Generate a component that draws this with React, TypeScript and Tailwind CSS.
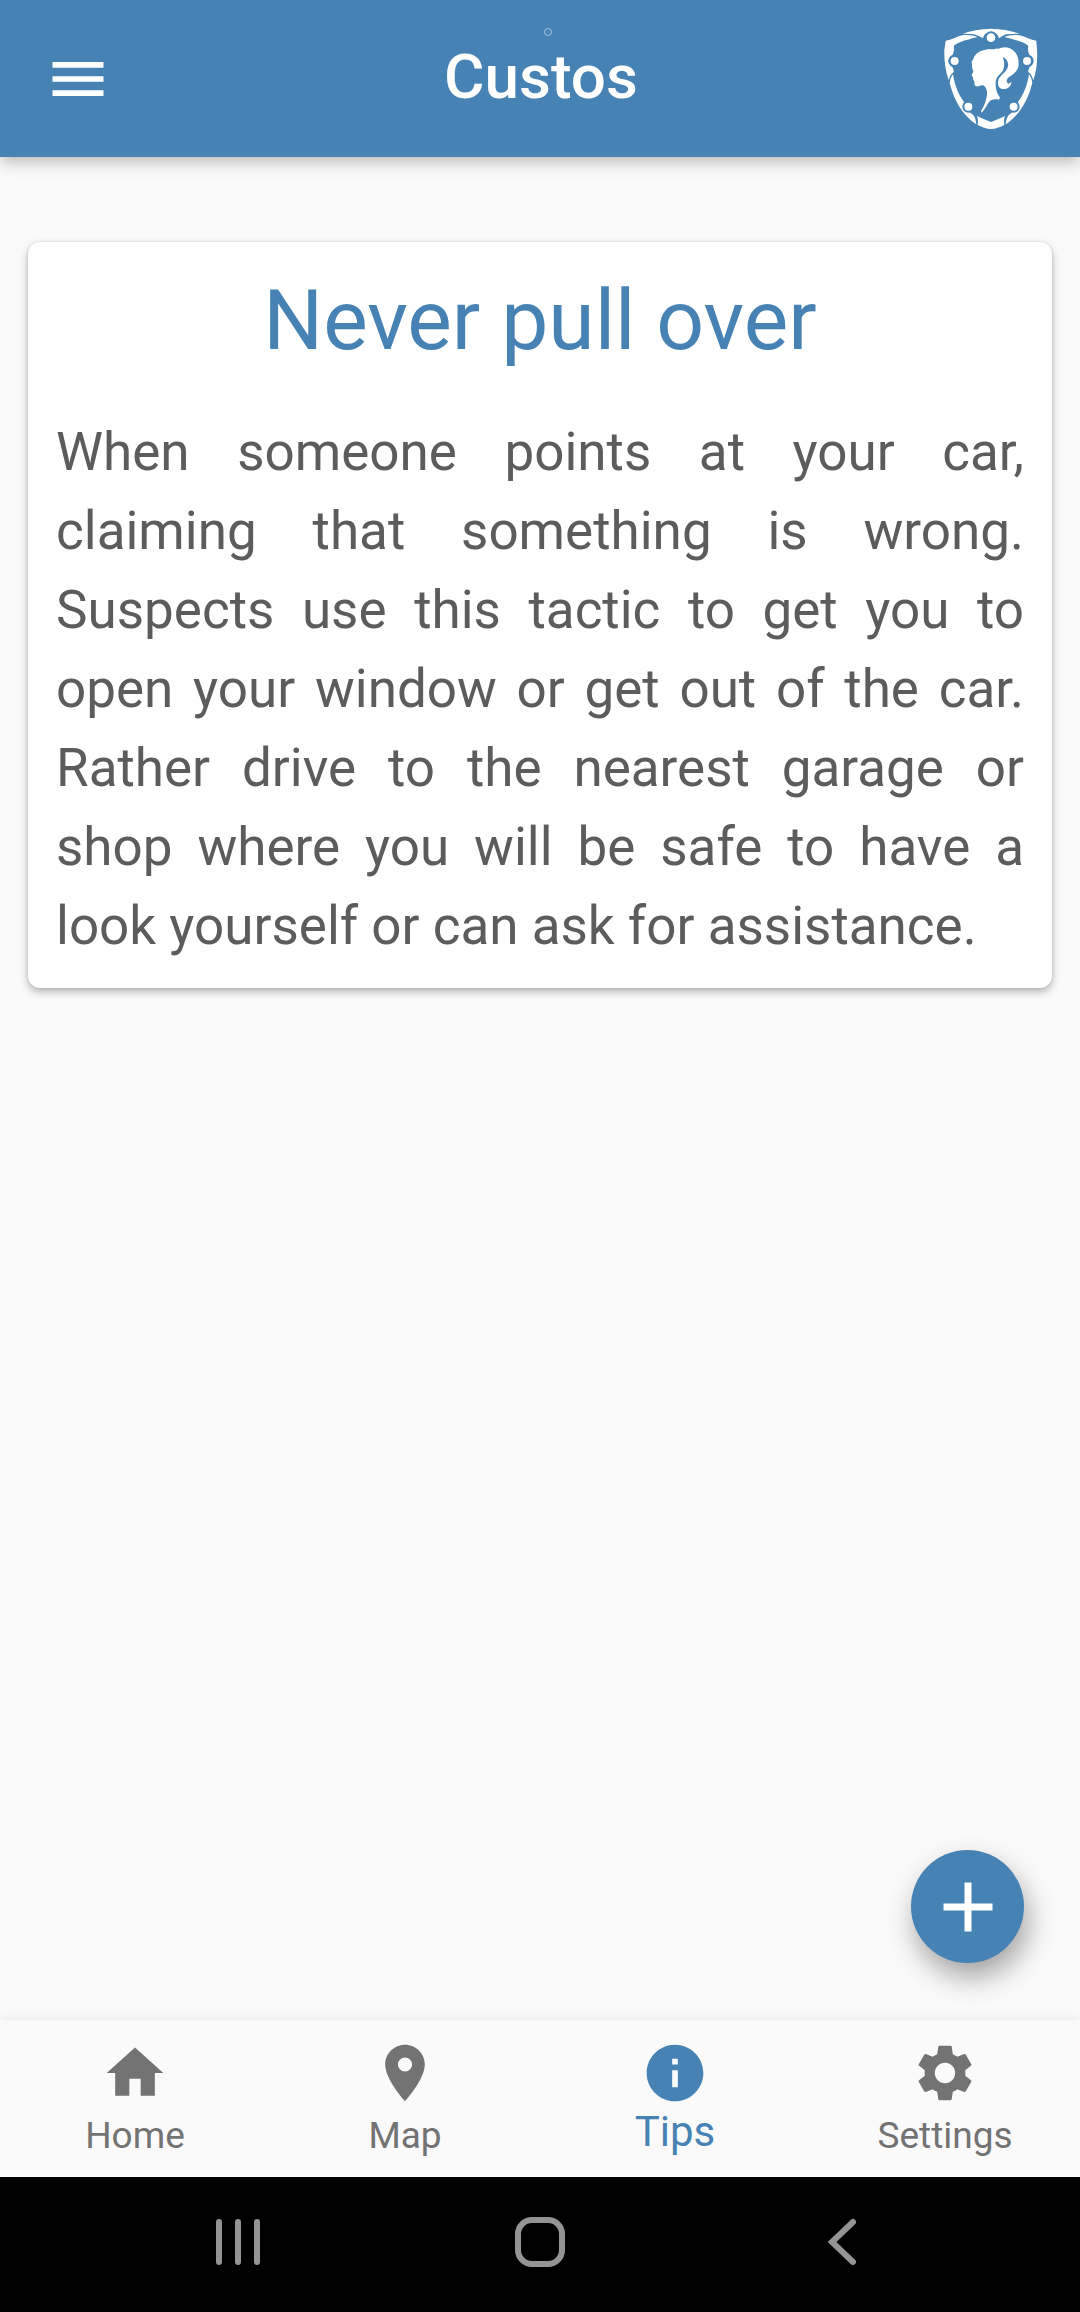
import type { ReactNode } from "react";
import { MdAdd, MdHome, MdInfo, MdMenu, MdPlace, MdSettings } from "react-icons/md";

function ShieldLogo() {
  return (
    <svg viewBox="72 54 285 306" className="h-[102px] w-[95px]" fill="#fff" role="img" aria-label="Custos shield">
      <path d="M131 71 C155 62 185 57 216 56 C247 57 277 62 301 71 L262 73 C250 77 246 81 240 85 C238 73 228 66 216 66 C204 66 194 73 192 85 C182 79 174 74 160 72 Z" />
      <path d="M80 92 C97 90 113 80 130 76 C148 73 163 76 176 81 C150 88 119 94 104 108 C106 117 105 126 101 134 C92 138 88 145 88 154 C89 162 94 168 100 171 C104 177 104 183 104 187 C97 190 93 198 89 211 C79 183 75 150 76 120 Z" />
      <path d="M352 92 C335 90 319 80 302 76 C284 73 269 76 256 81 C282 88 313 94 328 108 C326 117 327 126 331 134 C340 138 344 145 344 154 C343 162 338 168 332 171 C328 177 328 183 328 187 C335 190 339 198 343 211 C353 183 356 150 354 120 Z" />
      <path d="M102 193 C107 225 117 252 135 276 C130 291 135 302 148 304 C156 311 164 314 167 322 C170 330 171 335 172 343 C133 317 105 273 92 218 C94 207 97 199 102 193 Z" />
      <path d="M330 193 C325 225 315 252 297 276 C302 291 297 302 284 304 C276 311 268 314 265 322 C262 330 261 335 260 343 C299 317 327 273 340 218 C338 207 335 199 330 193 Z" />
      <path d="M174 318 C189 326 204 331 216 336 C228 331 243 326 258 318 C254 327 255 337 256 345 C243 352 230 357 216 357 C202 357 189 352 176 345 C177 337 178 327 174 318 Z" />
      <g stroke="#4682b4" strokeWidth="6">
        <circle cx="216" cy="83" r="16" />
        <circle cx="107" cy="153" r="15" />
        <circle cx="324" cy="153" r="15" />
        <circle cx="148" cy="290" r="15" />
        <circle cx="284" cy="290" r="15" />
      </g>
      <path d="M158 154 C165 148 162 143 169 135 C178 124 196 116 222 118 C228 119 231 113 238 117 C247 112 259 109 271 114 C290 121 299 139 299 161 C299 183 281 194 270 201 C260 209 262 219 269 221 C273 220 275 218 277 214 C278 229 266 237 253 237 C239 236 235 226 238 211 C242 194 264 188 267 168 C269 156 262 145 251 141 C259 160 256 179 247 188 C235 198 229 207 230 224 C231 243 236 253 243 262 L240 269 C230 267 218 268 212 274 C204 283 199 297 188 308 L186 304 C194 290 203 271 204 252 C205 239 200 231 193 226 C184 224 178 232 170 228 C163 224 169 216 164 211 C160 208 164 203 161 200 C156 197 158 193 162 188 C165 182 158 176 159 169 C160 164 158 160 158 154 Z" />
    </svg>
  );
}

type TabProps = { label: string; icon: ReactNode; active?: boolean };

function Tab({ label, icon, active = false }: TabProps) {
  return (
    <a
      href={"#" + label.toLowerCase()}
      aria-current={active ? "page" : undefined}
      className={
        active
          ? "flex flex-col items-center text-[42px] leading-[50px] text-[#4682b4]"
          : "flex flex-col items-center text-[37px] leading-[58px] text-[#737373]"
      }
    >
      {icon}
      <span>{label}</span>
    </a>
  );
}

export default function App() {
  return (
    <div className="flex min-h-screen flex-col bg-[#fafafa] font-[Roboto,sans-serif]">
      <header className="relative grid h-[157px] grid-cols-[1fr_auto_1fr] items-center bg-[#4682b4] pr-[42px] pl-11 text-white shadow-[0_4px_16px_rgba(0,0,0,0.28)]">
        <button type="button" aria-label="Open menu" className="justify-self-start">
          <MdMenu className="size-[68px]" />
        </button>
        <h1 className="pb-1 text-[62px] leading-none font-medium">Custos</h1>
        <div className="justify-self-end">
          <ShieldLogo />
        </div>
        <span className="absolute top-7 left-1/2 ml-1 size-2 rounded-full border border-white/50" />
      </header>

      <main className="relative flex-1 px-7 pt-[85px]">
        <article className="rounded-xl bg-white px-7 pt-[31px] pb-[22px] shadow-[0_4px_8px_rgba(0,0,0,0.28),0_0_3px_rgba(0,0,0,0.12)]">
          <h2 className="text-center text-[84px] leading-[96px] text-[#4682b4]">Never pull over</h2>
          <p className="mt-11 text-justify text-[53px] leading-[79px] text-[#5c5c5c]">
            When someone points at your car, claiming that something is wrong. Suspects use this tactic to get you to
            open your window or get out of the car. Rather drive to the nearest garage or shop where you will be safe to
            have a look yourself or can ask for assistance.
          </p>
        </article>
        <button
          type="button"
          aria-label="Add tip"
          className="absolute right-14 bottom-[57px] grid size-[113px] place-items-center rounded-full bg-[#4682b4] text-white shadow-[4px_14px_28px_rgba(0,0,0,0.35)]"
        >
          <MdAdd className="size-[84px]" />
        </button>
      </main>

      <nav
        aria-label="Main"
        className="grid h-[157px] grid-cols-4 bg-[#fafafa] pt-[19px] shadow-[0_-2px_8px_rgba(0,0,0,0.06)]"
      >
        <Tab label="Home" icon={<MdHome className="size-[68px]" />} />
        <Tab label="Map" icon={<MdPlace className="size-[68px]" />} />
        <Tab label="Tips" icon={<MdInfo className="size-[68px]" />} active />
        <Tab label="Settings" icon={<MdSettings className="size-[68px]" />} />
      </nav>

      <div className="flex h-[135px] items-center justify-center gap-[226px] bg-black pb-1.5 text-[#949494]">
        <button type="button" aria-label="Recent apps">
          <svg viewBox="0 0 76 52" className="h-[52px] w-[76px]" stroke="currentColor" strokeWidth="6" strokeLinecap="round">
            <path d="M19 6v40M38 6v40M57 6v40" />
          </svg>
        </button>
        <button type="button" aria-label="Home screen">
          <svg viewBox="0 0 76 52" className="h-[52px] w-[76px]" fill="none" stroke="currentColor" strokeWidth="6">
            <rect x="16" y="4" width="44" height="44" rx="14" />
          </svg>
        </button>
        <button type="button" aria-label="Back">
          <svg viewBox="0 0 76 52" className="h-[52px] w-[76px]" fill="none" stroke="currentColor" strokeWidth="6" strokeLinecap="round">
            <path d="M49 6L28 26L49 46" />
          </svg>
        </button>
      </div>
    </div>
  );
}
